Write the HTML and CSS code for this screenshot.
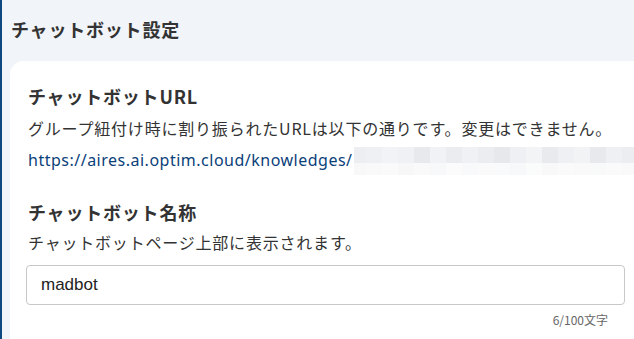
FILE: index.html
```html
<!DOCTYPE html>
<html lang="ja">
<head>
<meta charset="utf-8">
<link rel="stylesheet" href="styles.css">
</head>
<body>
<div class="page">
  <div class="accent"></div>
  <div class="main">
    <h1 class="page-title">チャットボット設定</h1>
    <div class="card">
      <section class="field">
        <h2 class="field-title">チャットボットURL</h2>
        <p class="field-desc">グループ紐付け時に割り振られたURLは以下の通りです。変更はできません。</p>
        <div class="url-line">
          <a class="url" href="#">https://aires.ai.optim.cloud/knowledges/</a>
          <span class="redact">
            <span class="row top">
              <i style="background:#eceef2;width:12px"></i><i style="background:#eff0f4"></i><i style="background:#f2f3f6"></i><i style="background:#f0f1f4"></i><i style="background:#e7e9ed"></i><i style="background:#f1f2f5"></i><i style="background:#eaecf0"></i><i style="background:#f0f1f4"></i><i style="background:#ebedf1"></i><i style="background:#e6e8ec"></i><i style="background:#eff0f3"></i><i style="background:#f3f4f6"></i><i style="background:#e8eaee"></i><i style="background:#eef0f3"></i><i style="background:#f2f3f5"></i><i style="background:#e7e9ed"></i><i style="background:#eff0f3"></i><i style="background:#ebedf0"></i>
            </span>
            <span class="row bottom">
              <i style="background:#f8f8f9;width:12px"></i><i style="background:#f9f9fa"></i><i style="background:#fafafb"></i><i style="background:#f7f7f8"></i><i style="background:#f9f9fa"></i><i style="background:#f7f8f9"></i><i style="background:#fbfbfb"></i><i style="background:#f8f9fa"></i><i style="background:#fafafa"></i><i style="background:#f9fafb"></i><i style="background:#f7f8f9"></i><i style="background:#fafbfb"></i><i style="background:#f8f8f9"></i><i style="background:#fafafa"></i><i style="background:#f9f9fa"></i><i style="background:#f8f9f9"></i><i style="background:#fafafa"></i><i style="background:#f9f9fa"></i>
            </span>
          </span>
        </div>
      </section>
      <section class="field second">
        <h2 class="field-title">チャットボット名称</h2>
        <p class="field-desc">チャットボットページ上部に表示されます。</p>
        <input class="text-input" type="text" value="madbot">
        <div class="counter">6/100文字</div>
      </section>
    </div>
  </div>
</div>
</body>
</html>
```

FILE: styles.css
```css
* { box-sizing: border-box; }
html, body {
  margin: 0;
  padding: 0;
  width: 634px;
  height: 339px;
  overflow: hidden;
  background: #f1f4f8;
  font-family: "Noto Sans CJK JP", "Noto Sans", sans-serif;
  color: #333;
}
.page {
  display: flex;
  height: 339px;
}
.accent {
  flex: 0 0 2px;
  background: #0e4682;
}
.main {
  flex: 1;
  padding-left: 8px;
  min-width: 0;
  display: flex;
  flex-direction: column;
  overflow: hidden;
}
.page-title {
  margin: 0;
  flex: 0 0 61px;
  padding: 15px 0 0 1px;
  font-size: 18px;
  line-height: 28px;
  font-weight: 700;
  letter-spacing: 0.8px;
  color: #333;
}
.card {
  flex: 1;
  background: #fff;
  border-top-left-radius: 14px;
  margin-right: -20px;
  padding: 21px 0 0 18px;
  overflow: hidden;
}
.field-title {
  margin: 0;
  font-size: 18px;
  line-height: 28px;
  font-weight: 700;
  letter-spacing: 0.8px;
}
.field-desc {
  margin: 2px 0 0;
  font-size: 16px;
  line-height: 32px;
  letter-spacing: 0.8px;
  white-space: nowrap;
}
.second .field-desc { margin-top: 0; }
.url-line {
  display: flex;
  align-items: center;
  height: 32px;
}
.url {
  font-family: "Noto Sans", sans-serif;
  font-size: 16px;
  color: #0b4179;
  text-decoration: none;
  letter-spacing: 0.5px;
  white-space: nowrap;
}
.redact {
  display: flex;
  flex-direction: column;
  margin-left: 1px;
  margin-top: 1px;
  flex: none;
}
.row {
  display: flex;
}
.row i {
  display: block;
  width: 16px;
  flex: none;
}
.row.top i { height: 16px; }
.row.bottom i { height: 12px; }
.second {
  margin-top: 22px;
}
.text-input {
  display: block;
  margin: 7px 0 0 -2px;
  width: 599px;
  height: 40px;
  border: 1px solid #c8c8c8;
  border-radius: 4px;
  padding: 0 14px;
  font-family: "Liberation Sans", Arial, sans-serif;
  font-size: 17px;
  color: #222;
  background: #fff;
  outline: none;
}
.counter {
  width: 580px;
  margin-top: 7px;
  text-align: right;
  font-size: 12px;
  line-height: 16px;
  color: #666;
}
```
